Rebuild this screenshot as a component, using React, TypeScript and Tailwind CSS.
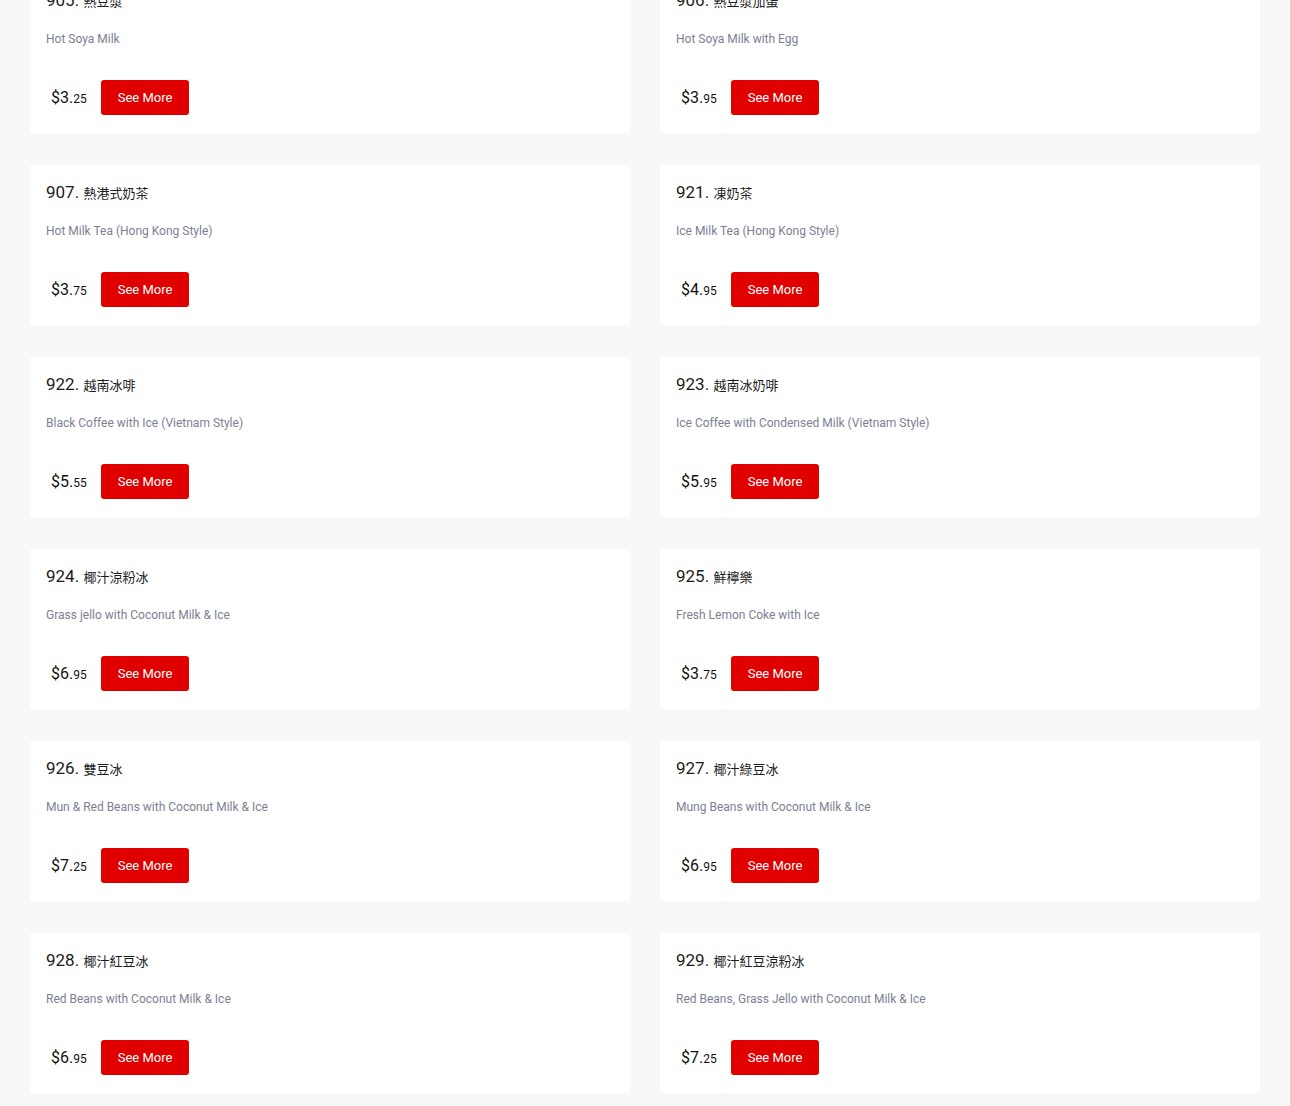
import React from 'react';

const items = [
  { no: 905, zh: '熱豆漿', en: 'Hot Soya Milk', price: '3', cents: '25' },
  { no: 906, zh: '熱豆漿加蛋', en: 'Hot Soya Milk with Egg', price: '3', cents: '95' },
  { no: 907, zh: '熱港式奶茶', en: 'Hot Milk Tea (Hong Kong Style)', price: '3', cents: '75' },
  { no: 921, zh: '凍奶茶', en: 'Ice Milk Tea (Hong Kong Style)', price: '4', cents: '95' },
  { no: 922, zh: '越南冰啡', en: 'Black Coffee with Ice (Vietnam Style)', price: '5', cents: '55' },
  { no: 923, zh: '越南冰奶啡', en: 'Ice Coffee with Condensed Milk (Vietnam Style)', price: '5', cents: '95' },
  { no: 924, zh: '椰汁涼粉冰', en: 'Grass jello with Coconut Milk & Ice', price: '6', cents: '95' },
  { no: 925, zh: '鮮檸樂', en: 'Fresh Lemon Coke with Ice', price: '3', cents: '75' },
  { no: 926, zh: '雙豆冰', en: 'Mun & Red Beans with Coconut Milk & Ice', price: '7', cents: '25' },
  { no: 927, zh: '椰汁綠豆冰', en: 'Mung Beans with Coconut Milk & Ice', price: '6', cents: '95' },
  { no: 928, zh: '椰汁紅豆冰', en: 'Red Beans with Coconut Milk & Ice', price: '6', cents: '95' },
  { no: 929, zh: '椰汁紅豆涼粉冰', en: 'Red Beans, Grass Jello with Coconut Milk & Ice', price: '7', cents: '25' },
];

function MenuCard({ no, zh, en, price, cents }: any) {
  return (
    <div className="bg-white h-[160px] pt-4 px-4 pb-[18px] flex flex-col">
      <h3 className="text-[17px] leading-[22px] text-[#1c1c1c] font-normal">
        {no}. <span className="text-[13px]">{zh}</span>
      </h3>
      <p className="mt-[17px] text-[12px] leading-[18px] text-[#7b8193]">{en}</p>
      <div className="mt-auto flex items-center">
        <span className="pl-[5px] w-[55px] text-[#111] text-[16px]">
          ${price}.<span className="text-[12px]">{cents}</span>
        </span>
        <button className="w-[88px] h-[35px] rounded-[3px] bg-[#e00000] text-white text-[13px]">See More</button>
      </div>
    </div>
  );
}

export default function App() {
  return (
    <div
      className="min-h-[1106px] bg-[#f8f8f8] overflow-hidden"
      style={{ fontFamily: 'Roboto, "Noto Sans CJK TC", sans-serif' }}
    >
      <div className="-mt-[27px] px-[30px] grid grid-cols-2 gap-x-[30px] gap-y-[32px]">
        {items.map((it) => (
          <MenuCard key={it.no} {...it} />
        ))}
      </div>
    </div>
  );
}
